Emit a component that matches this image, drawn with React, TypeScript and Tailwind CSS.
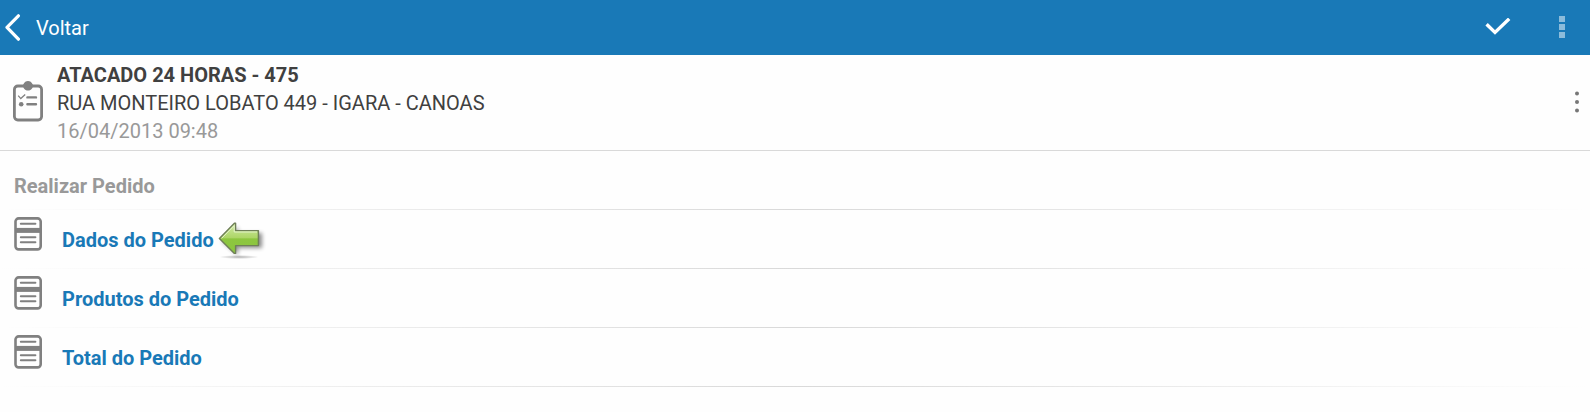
import type { ReactNode } from "react";

type MenuItem = {
  label: string;
  highlighted?: boolean;
};

const items: MenuItem[] = [
  { label: "Dados do Pedido", highlighted: true },
  { label: "Produtos do Pedido" },
  { label: "Total do Pedido" },
];

function BackIcon() {
  return (
    <svg width="16" height="28" viewBox="0 0 16 28" fill="none" aria-hidden="true">
      <path d="M13.4 1.8 2 13.4l11.4 11.8" stroke="#fff" strokeWidth="3.2" strokeLinecap="round" strokeLinejoin="round" />
    </svg>
  );
}

function CheckIcon() {
  return (
    <svg width="26" height="18" viewBox="0 0 26 18" fill="none" aria-hidden="true">
      <path d="M1.6 6.2 10 14.4 24.2 0.8" stroke="#fff" strokeWidth="3.4" />
    </svg>
  );
}

function MenuIcon() {
  return (
    <svg width="6" height="22" viewBox="0 0 6 22" fill="#8cbcdb" aria-hidden="true">
      <rect width="6" height="6" />
      <rect y="8" width="6" height="6" />
      <rect y="16" width="6" height="6" />
    </svg>
  );
}

function DotsIcon() {
  return (
    <svg width="4" height="22" viewBox="0 0 4 22" fill="#777" aria-hidden="true">
      <circle cx="2" cy="2.4" r="2" />
      <circle cx="2" cy="11" r="2" />
      <circle cx="2" cy="19.6" r="2" />
    </svg>
  );
}

function ClipboardIcon() {
  return (
    <svg width="30" height="41" viewBox="0 0 30 41" fill="none" stroke="#808080" aria-hidden="true">
      <rect x="1.4" y="5" width="27.2" height="34" rx="3.4" strokeWidth="2.8" />
      <path d="M10.2 3.4C11.4 1.2 13 0 15 0s3.6 1.2 4.8 3.4V6c-.6 1.8-2 3.4-3.6 3.4h-2.4c-1.6 0-3-1.6-3.6-3.4V3.4Z" fill="#808080" stroke="none" />
      <path d="m5.2 14.6 2.6 3 4.4-4" strokeWidth="1.3" />
      <circle cx="8.2" cy="23.2" r="2.3" fill="#808080" stroke="none" />
      <path d="M14.4 16.4h8.6M14.4 23.2h8.6" strokeWidth="2.4" strokeLinecap="round" />
    </svg>
  );
}

function FormIcon() {
  return (
    <svg width="28" height="34" viewBox="0 0 28 34" fill="none" stroke="#808080" aria-hidden="true">
      <rect x="1.5" y="1.4" width="25.2" height="31" rx="3.2" strokeWidth="2.6" />
      <path d="M1.5 13.4h25.2" strokeWidth="5" />
      <path d="M6.8 6.8h14.6M6.8 20.2h14.6M6.8 25.2h14.6" strokeWidth="2" strokeLinecap="round" />
    </svg>
  );
}

function GreenArrow() {
  return (
    <svg width="50" height="42" viewBox="0 0 50 42" aria-hidden="true">
      <defs>
        <linearGradient id="arrow-fill" x1="0" y1="0" x2="0" y2="1">
          <stop offset="0" stopColor="#d2eaa8" />
          <stop offset="0.48" stopColor="#add667" />
          <stop offset="0.52" stopColor="#8dc63f" />
          <stop offset="1" stopColor="#8bc540" />
        </linearGradient>
        <filter id="arrow-blur" x="-30%" y="-30%" width="160%" height="160%">
          <feGaussianBlur stdDeviation="2" />
        </filter>
        <radialGradient id="arrow-ground">
          <stop offset="0" stopColor="#000" stopOpacity="0.3" />
          <stop offset="1" stopColor="#000" stopOpacity="0" />
        </radialGradient>
      </defs>
      <ellipse cx="21" cy="35" rx="20" ry="2" fill="url(#arrow-ground)" />
      <path d="M4 19 20 5v6h24v15H20V33Z" fill="#000" opacity="0.45" filter="url(#arrow-blur)" />
      <path d="M1.4 16.6 16.4 1.2h1.2v7.4h22.8v15H17.6v7.8h-1.2Z" fill="url(#arrow-fill)" stroke="#6f7f58" strokeWidth="1.4" strokeLinejoin="round" />
      <path d="M3.6 16.4 16.2 3.6V10h22.8" fill="none" stroke="#e2f2c8" strokeWidth="1" />
    </svg>
  );
}

function FadeLine() {
  return (
    <div className="h-px bg-linear-to-r from-transparent via-[#d9d9d9] to-transparent" />
  );
}

function IconButton({ label, children }: { label: string; children: ReactNode }) {
  return (
    <button type="button" aria-label={label} className="flex items-center justify-center pb-0.5">
      {children}
    </button>
  );
}

export default function App() {
  return (
    <div className="min-h-screen bg-[#fefefe] font-[Roboto,sans-serif] text-xl leading-7 text-[#404040]">
      <header className="flex h-[55px] items-center justify-between bg-[#1979b7] pr-[25px] pl-[5px]">
        <button type="button" className="flex items-center gap-[15px] text-white">
          <BackIcon />
          <span>Voltar</span>
        </button>
        <div className="flex items-center gap-12">
          <IconButton label="Confirmar">
            <CheckIcon />
          </IconButton>
          <IconButton label="Menu">
            <MenuIcon />
          </IconButton>
        </div>
      </header>

      <section className="flex items-center border-b border-[#d9d9d9] pt-1.5 pr-[11px] pb-[5px] pl-[13px]">
        <div className="pb-1">
          <ClipboardIcon />
        </div>
        <div className="ml-3.5 flex-1">
          <h1 className="font-bold">ATACADO 24 HORAS - 475</h1>
          <p>RUA MONTEIRO LOBATO 449 - IGARA - CANOAS</p>
          <p className="text-[#999]">16/04/2013 09:48</p>
        </div>
        <IconButton label="Mais opções">
          <DotsIcon />
        </IconButton>
      </section>

      <main>
        <h2 className="px-3.5 pt-[21px] pb-[9px] font-bold text-[#999]">Realizar Pedido</h2>
        <FadeLine />
        <ul>
          {items.map((item) => (
            <li key={item.label}>
              <a href="#" className="flex h-[58px] items-start pl-3.5 font-bold text-[#1979b7]">
                <span className="pt-[7px]">
                  <FormIcon />
                </span>
                <span className="ml-5 pt-4">{item.label}</span>
                {item.highlighted && (
                  <span className="ml-1 pt-3">
                    <GreenArrow />
                  </span>
                )}
              </a>
              <FadeLine />
            </li>
          ))}
        </ul>
      </main>
    </div>
  );
}
